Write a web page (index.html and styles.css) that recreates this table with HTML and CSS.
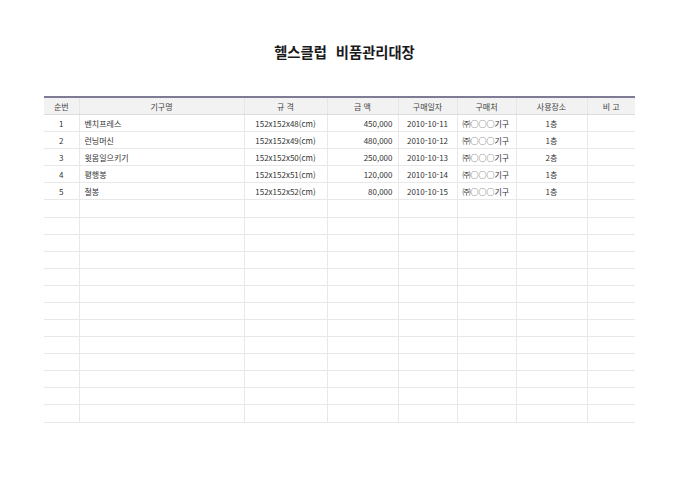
FILE: index.html
```html
<!DOCTYPE html>
<html lang="ko">
<head>
<meta charset="utf-8">
<link rel="stylesheet" href="styles.css">
</head>
<body>
<div class="page">
  <h1 class="title">헬스클럽 비품관리대장</h1>
  <table class="ledger">
    <colgroup>
      <col class="c1"><col class="c2"><col class="c3"><col class="c4"><col class="c5"><col class="c6"><col class="c7"><col class="c8">
    </colgroup>
    <thead>
      <tr><th>순번</th><th>기구명</th><th>규 격</th><th>금 액</th><th>구매일자</th><th>구매처</th><th>사용장소</th><th>비 고</th></tr>
    </thead>
    <tbody>
      <tr><td class="ctr">1</td><td class="lft">벤치프레스</td><td class="ctr">152x152x48(cm)</td><td class="rgt">450,000</td><td class="ctr">2010-10-11</td><td class="lft">㈜○○○기구</td><td class="ctr">1층</td><td></td></tr>
      <tr><td class="ctr">2</td><td class="lft">런닝머신</td><td class="ctr">152x152x49(cm)</td><td class="rgt">480,000</td><td class="ctr">2010-10-12</td><td class="lft">㈜○○○기구</td><td class="ctr">1층</td><td></td></tr>
      <tr><td class="ctr">3</td><td class="lft">윗몸일으키기</td><td class="ctr">152x152x50(cm)</td><td class="rgt">250,000</td><td class="ctr">2010-10-13</td><td class="lft">㈜○○○기구</td><td class="ctr">2층</td><td></td></tr>
      <tr><td class="ctr">4</td><td class="lft">평행봉</td><td class="ctr">152x152x51(cm)</td><td class="rgt">120,000</td><td class="ctr">2010-10-14</td><td class="lft">㈜○○○기구</td><td class="ctr">1층</td><td></td></tr>
      <tr><td class="ctr">5</td><td class="lft">철봉</td><td class="ctr">152x152x52(cm)</td><td class="rgt">80,000</td><td class="ctr">2010-10-15</td><td class="lft">㈜○○○기구</td><td class="ctr">1층</td><td></td></tr>
      <tr><td></td><td></td><td></td><td></td><td></td><td></td><td></td><td></td></tr>
      <tr><td></td><td></td><td></td><td></td><td></td><td></td><td></td><td></td></tr>
      <tr><td></td><td></td><td></td><td></td><td></td><td></td><td></td><td></td></tr>
      <tr><td></td><td></td><td></td><td></td><td></td><td></td><td></td><td></td></tr>
      <tr><td></td><td></td><td></td><td></td><td></td><td></td><td></td><td></td></tr>
      <tr><td></td><td></td><td></td><td></td><td></td><td></td><td></td><td></td></tr>
      <tr><td></td><td></td><td></td><td></td><td></td><td></td><td></td><td></td></tr>
      <tr><td></td><td></td><td></td><td></td><td></td><td></td><td></td><td></td></tr>
      <tr><td></td><td></td><td></td><td></td><td></td><td></td><td></td><td></td></tr>
      <tr><td></td><td></td><td></td><td></td><td></td><td></td><td></td><td></td></tr>
      <tr><td></td><td></td><td></td><td></td><td></td><td></td><td></td><td></td></tr>
      <tr><td></td><td></td><td></td><td></td><td></td><td></td><td></td><td></td></tr>
      <tr><td></td><td></td><td></td><td></td><td></td><td></td><td></td><td></td></tr>
    </tbody>
  </table>
</div>
</body>
</html>
```

FILE: styles.css
```css
html, body {
  margin: 0;
  padding: 0;
  background: #ffffff;
}
body {
  font-family: "Noto Sans CJK KR", "Noto Sans", sans-serif;
  color: #333333;
}
.page {
  padding: 40px 45px 0 44px;
}
.title {
  margin: 0 0 32px 0;
  padding-left: 10px;
  text-align: center;
  font-size: 14.3px;
  line-height: 24px;
  font-weight: bold;
  color: #1a1a1a;
  letter-spacing: 0;
  word-spacing: 5px;
}
.ledger {
  width: 591px;
  border-collapse: collapse;
  table-layout: fixed;
  font-size: 8px;
  border-top: 2px solid #7e7c95;
  border-bottom: 1px solid #d4d4d4;
}
.c1 { width: 35px; }
.c2 { width: 165px; }
.c3 { width: 83px; }
.c4 { width: 71px; }
.c5 { width: 59px; }
.c6 { width: 59px; }
.c7 { width: 71px; }
.c8 { width: 48px; }
.ledger th {
  height: 16px;
  padding: 0;
  background: #f2f2f2;
  font-weight: normal;
  color: #444444;
  text-align: center;
  border-left: 1px solid #e6e6e6;
  border-bottom: 1px solid #dcdcdc;
}
.ledger td {
  height: 16px;
  padding: 0;
  border-left: 1px solid #e8e8e8;
  border-bottom: 1px solid #e8e8e8;
  white-space: nowrap;
  overflow: hidden;
}
.ledger tbody tr:nth-child(3n) td { height: 16.3px; }
.ledger th:first-child, .ledger td:first-child { border-left: none; }
.ctr { text-align: center; }
.lft { text-align: left; padding-left: 5px !important; }
.rgt { text-align: right; padding-right: 5px !important; }
```
